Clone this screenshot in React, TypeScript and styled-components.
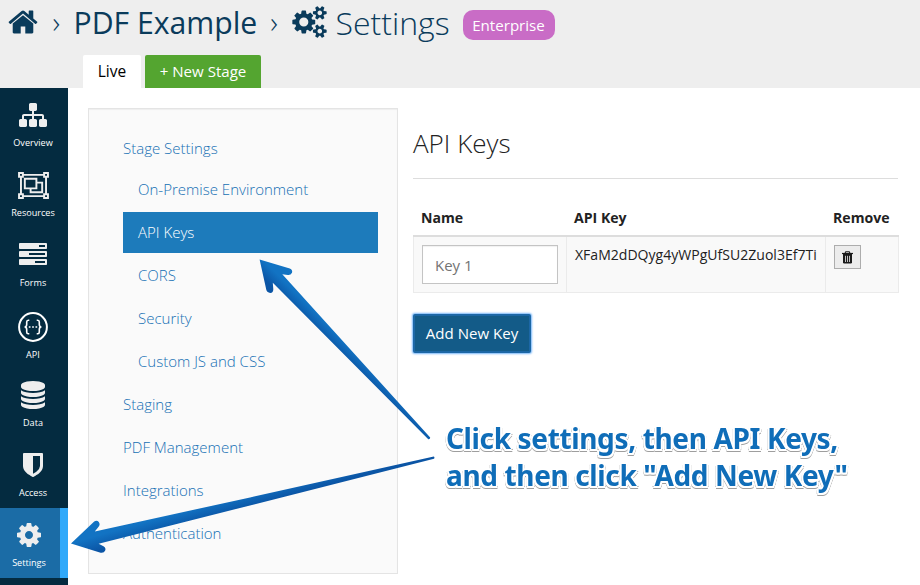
import React from 'react';
import styled, { createGlobalStyle } from 'styled-components';

const GlobalStyle = createGlobalStyle`
  *, *::before, *::after { box-sizing: border-box; }
  html, body { margin: 0; padding: 0; overflow: hidden; }
  body { background: #fff; color: #222; font-family: "Open Sans", "Noto Sans", sans-serif; }
`;

const Page = styled.div`
  position: relative;
  width: 920px;
  height: 585px;
  overflow: hidden;
  background: #fff;
`;

const Header = styled.header`
  height: 88px;
  background: #eee;
  color: #0a3b5b;
`;

const Breadcrumb = styled.div`
  display: flex;
  align-items: center;
  height: 44px;
  padding-left: 7px;
  line-height: 44px;
`;

const Chevron = styled.span<{ $w: number }>`
  width: ${p => p.$w}px;
  padding-bottom: 1px;
  text-align: center;
  font-size: 30px;
  font-weight: 300;
`;

const ProjectName = styled.span`
  width: 183px;
  margin-top: 2px;
  font-size: 30.2px;
  white-space: nowrap;
`;

const SectionName = styled.span`
  width: 136px;
  margin-top: 1px;
  padding-left: 9px;
  font-size: 32px;
  font-weight: 300;
`;

const PlanBadge = styled.span`
  width: 92px;
  height: 30px;
  margin-top: 6px;
  border-radius: 10px;
  background: #c96cc6;
  color: #fff;
  font-size: 15.1px;
  line-height: 30px;
  text-align: center;
`;

const Tabs = styled.div`
  display: flex;
  gap: 4px;
  height: 44px;
  padding: 11px 0 0 83px;
`;

const Tab = styled.div<{ $primary?: boolean }>`
  width: ${p => (p.$primary ? 116 : 58)}px;
  border-radius: 2px 2px 0 0;
  background: ${p => (p.$primary ? '#54a530' : '#fff')};
  color: ${p => (p.$primary ? '#fff' : '#000')};
  font-size: ${p => (p.$primary ? 15.1 : 15.5)}px;
  line-height: 33px;
  text-align: center;
`;

const Body = styled.div`
  display: flex;
  height: 497px;
`;

const Sidebar = styled.nav`
  flex: none;
  width: 68px;
  background: #042b40;
`;

const SideItem = styled.div<{ $active?: boolean; $low?: boolean }>`
  display: flex;
  flex-direction: column;
  align-items: center;
  gap: 6px;
  height: 70px;
  padding: ${p => (p.$low ? 14 : 12)}px 2px 0 0;
  color: #eee;
  ${p => p.$active && `
    background: #1b6ca6;
    border-right: 8px solid #30a9fa;
  `}
`;

const SideIcon = styled.div`
  display: flex;
  align-items: center;
  justify-content: center;
  height: 30px;
`;

const SideLabel = styled.div`
  color: #fff;
  font-size: 9.1px;
  line-height: 13px;
`;

const SettingsMenu = styled.nav`
  flex: none;
  width: 310px;
  height: 466px;
  margin: 20px 0 0 20px;
  padding: 19px 19px 0 34px;
  border: 1px solid #e4e4e4;
  background: #fafafa;
  box-shadow: inset 0 1px 1px rgba(0, 0, 0, 0.05);
`;

const MenuItem = styled.div<{ $nested?: boolean; $active?: boolean; $tight?: boolean }>`
  height: 41px;
  margin-top: ${p => (p.$tight ? 0 : 2)}px;
  padding-left: ${p => (p.$nested ? 15 : 0)}px;
  background: ${p => (p.$active ? '#1d7bbb' : 'transparent')};
  color: ${p => (p.$active ? '#fff' : '#1670b4')};
  font-size: 15.02px;
  font-weight: ${p => (p.$active ? 340 : 310)};
  line-height: 41px;
`;

const Content = styled.main`
  width: 485px;
  margin-left: 15px;
`;

const Heading = styled.h2`
  height: 91px;
  margin: 0;
  padding-top: 34px;
  border-bottom: 1px solid #ddd;
  font-size: 26px;
  font-weight: 300;
  line-height: 42px;
`;

const KeyTable = styled.div`
  display: grid;
  grid-template-columns: 153px 259px 74px;
  margin-top: 21px;
`;

const HeadCell = styled.div`
  height: 37px;
  padding-left: 8px;
  border-bottom: 2px solid #ddd;
  font-size: 14.1px;
  font-weight: 700;
  line-height: 36px;
`;

const Cell = styled.div`
  height: 56px;
  padding: 8px;
  border: 1px solid #ebebeb;
  border-width: 0 0 1px 1px;
  background: #f9f9f9;
  font-size: 14.06px;
  line-height: 20px;
  &:last-child { border-right-width: 1px; }
`;

const NameInput = styled.div`
  width: 136px;
  height: 39px;
  padding-left: 12px;
  border: 1px solid #c4c4c4;
  background: #fff;
  box-shadow: inset 0 1px 1px rgba(0, 0, 0, 0.06);
  color: #737373;
  font-size: 15px;
  line-height: 39px;
`;

const RemoveButton = styled.button`
  display: flex;
  align-items: center;
  justify-content: center;
  width: 27px;
  height: 24px;
  padding: 0;
  border: 1px solid #adadad;
  background: #ececec;
  color: #1a1a1a;
`;

const AddButton = styled.button`
  display: block;
  width: 118px;
  height: 39px;
  margin-top: 21px;
  padding: 0;
  border: 2px solid #1c67a6;
  border-radius: 2px;
  background: #135b88;
  box-shadow: 0 0 2px 1px #78b6f8;
  color: #fff;
  font: 400 15.05px/35px "Open Sans", sans-serif;
`;

const ArrowLayer = styled.svg`
  position: absolute;
  top: 0;
  left: 0;
  pointer-events: none;
`;

const Callout = styled.div`
  position: absolute;
  top: 420.4px;
  left: 446px;
  color: #0f6db8;
  font: 700 28px/36.4px "Noto Sans", sans-serif;
  letter-spacing: -0.36px;
  white-space: pre;
  text-shadow: 2px 0 #fff, -2px 0 #fff, 0 2px #fff, 0 -2px #fff,
    1.5px 1.5px #fff, -1.5px 1.5px #fff, 1.5px -1.5px #fff, -1.5px -1.5px #fff;
  filter: drop-shadow(0 1px 0.6px rgba(0, 0, 0, 0.38));
`;

const paths = {
  home: 'M1472 992v480q0 26-19 45t-45 19h-384v-384h-256v384h-384q-26 0-45-19t-19-45v-480q0-1 .5-3t.5-3l575-474 575 474q1 2 1 6zm223-69l-62 74q-8 9-21 11h-3q-13 0-21-7l-692-577-692 577q-12 8-24 7-13-2-21-11l-62-74q-8-10-7-23.5t11-21.5l719-599q32-26 76-26t76 26l244 204v-195q0-14 9-23t23-9h192q14 0 23 9t9 23v408l219 182q10 8 11 21.5t-7 23.5z',
  cogs: 'M832 896q0-106-75-181t-181-75-181 75-75 181 75 181 181 75 181-75 75-181zm768 512q0-52-38-90t-90-38-90 38-38 90q0 53 37.5 90.5t90.5 37.5 90.5-37.5 37.5-90.5zm0-1024q0-52-38-90t-90-38-90 38-38 90q0 53 37.5 90.5t90.5 37.5 90.5-37.5 37.5-90.5zm-384 421v185q0 10-7 19.5t-16 10.5l-155 24q-11 35-32 76 34 48 90 115 7 11 7 20 0 12-7 19-23 30-82.5 89.5t-78.5 59.5q-11 0-21-7l-115-90q-37 19-77 31-11 108-23 155-7 24-30 24h-186q-11 0-20-7.5t-10-17.5l-23-153q-34-10-75-31l-118 89q-7 7-20 7-11 0-21-8-144-133-144-160 0-9 7-19 10-14 41-53t47-61q-23-44-35-82l-152-24q-10-1-17-9.5t-7-19.5v-185q0-10 7-19.5t16-10.5l155-24q11-35 32-76-34-48-90-115-7-11-7-20 0-12 7-20 22-30 82-89t79-59q11 0 21 7l115 90q34-18 77-32 11-108 23-154 7-24 30-24h186q11 0 20 7.5t10 17.5l23 153q34 10 75 31l118-89q8-7 20-7 11 0 21 8 144 133 144 160 0 9-7 19-12 16-42 54t-45 60q23 48 34 82l152 23q10 2 17 10.5t7 19.5zm640 533v140q0 16-149 31-12 27-30 52 51 113 51 138 0 4-4 7-122 71-124 71-8 0-46-47t-52-68q-20 2-30 2t-30-2q-14 21-52 68t-46 47q-2 0-124-71-4-3-4-7 0-25 51-138-18-25-30-52-149-15-149-31v-140q0-16 149-31 13-29 30-52-51-113-51-138 0-4 4-7 4-2 35-20t59-34 30-16q8 0 46 46.5t52 67.5q20-2 30-2t30 2q51-71 92-112l6-2q4 0 124 70 4 3 4 7 0 25-51 138 17 23 30 52 149 15 149 31zm0-1024v140q0 16-149 31-12 27-30 52 51 113 51 138 0 4-4 7-122 71-124 71-8 0-46-47t-52-68q-20 2-30 2t-30-2q-14 21-52 68t-46 47q-2 0-124-71-4-3-4-7 0-25 51-138-18-25-30-52-149-15-149-31v-140q0-16 149-31 13-29 30-52-51-113-51-138 0-4 4-7 4-2 35-20t59-34 30-16q8 0 46 46.5t52 67.5q20-2 30-2t30 2q51-71 92-112l6-2q4 0 124 70 4 3 4 7 0 25-51 138 17 23 30 52 149 15 149 31z',
  sitemap: 'M1792 1248v320q0 40-28 68t-68 28h-320q-40 0-68-28t-28-68v-320q0-40 28-68t68-28h96v-192h-512v192h96q40 0 68 28t28 68v320q0 40-28 68t-68 28h-320q-40 0-68-28t-28-68v-320q0-40 28-68t68-28h96v-192h-512v192h96q40 0 68 28t28 68v320q0 40-28 68t-68 28h-320q-40 0-68-28t-28-68v-320q0-40 28-68t68-28h96v-192q0-52 38-90t90-38h512v-192h-96q-40 0-68-28t-28-68v-320q0-40 28-68t68-28h320q40 0 68 28t28 68v320q0 40-28 68t-68 28h-96v192h512q52 0 90 38t38 90v192h96q40 0 68 28t28 68z',
  group: 'M2048 384h-128v1024h128v384h-384v-128h-1280v128h-384v-384h128v-1024h-128v-384h384v128h1280v-128h384zM1792 128v128h128v-128zM128 128v128h128v-128zM256 1664v-128h-128v128zM1664 1536v-128h128v-1024h-128v-128h-1280v128h-128v1024h128v128zM1920 1664v-128h-128v128zM1280 640h384v768h-896v-256h-384v-768h896zM512 1024h640v-512h-640zM1536 1280v-512h-256v384h-384v128z',
  tasks: 'M1024 1408h640v-128h-640v128zm-384-512h1024v-128h-1024v128zm640-512h384v-128h-384v128zm512 832v256q0 26-19 45t-45 19h-1664q-26 0-45-19t-19-45v-256q0-26 19-45t45-19h1664q26 0 45 19t19 45zm0-512v256q0 26-19 45t-45 19h-1664q-26 0-45-19t-19-45v-256q0-26 19-45t45-19h1664q26 0 45 19t19 45zm0-512v256q0 26-19 45t-45 19h-1664q-26 0-45-19t-19-45v-256q0-26 19-45t45-19h1664q26 0 45 19t19 45z',
  database: 'M896 768q237 0 443-43t325-127v170q0 69-103 128t-280 93.5-385 34.5-385-34.5-280-93.5-103-128v-170q119 84 325 127t443 43zm0 768q237 0 443-43t325-127v170q0 69-103 128t-280 93.5-385 34.5-385-34.5-280-93.5-103-128v-170q119 84 325 127t443 43zm0-384q237 0 443-43t325-127v170q0 69-103 128t-280 93.5-385 34.5-385-34.5-280-93.5-103-128v-170q119 84 325 127t443 43zm0-1152q208 0 385 34.5t280 93.5 103 128v128q0 69-103 128t-280 93.5-385 34.5-385-34.5-280-93.5-103-128v-128q0-69 103-128t280-93.5 385-34.5z',
  shield: 'M1344 960v-640h-448v1137q119-63 213-137 235-184 235-360zm192-768v768q0 86-33.5 170.5t-83 150-118 127.5-126.5 103-121 77.5-89.5 49.5-42.5 20q-12 6-26 6t-26-6q-16-7-42.5-20t-89.5-49.5-121-77.5-126.5-103-118-127.5-83-150-33.5-170.5v-768q0-26 19-45t45-19h1152q26 0 45 19t19 45z',
  cog: 'M1152 896q0-106-75-181t-181-75-181 75-75 181 75 181 181 75 181-75 75-181zm512-109v222q0 12-8 23t-20 13l-185 28q-19 54-39 91 35 50 107 138 10 12 10 25t-9 23q-27 37-99 108t-94 71q-12 0-26-9l-138-108q-44 23-91 38-16 136-29 186-7 28-36 28h-222q-14 0-24.5-8.5t-11.5-21.5l-28-184q-49-16-90-37l-141 107q-10 9-25 9-14 0-25-11-126-114-165-168-7-10-7-23 0-12 8-23 15-21 51-66.5t54-70.5q-27-50-41-99l-183-27q-13-2-21-12.5t-8-23.5v-222q0-12 8-23t19-13l186-28q14-46 39-92-40-57-107-138-10-12-10-24 0-10 9-23 26-36 98.5-107.5t94.5-71.5q13 0 26 10l138 107q44-23 91-38 16-136 29-186 7-28 36-28h222q14 0 24.5 8.5t11.5 21.5l28 184q49 16 90 37l142-107q9-9 24-9 13 0 25 10 129 119 165 170 7 8 7 22 0 12-8 23-15 21-51 66.5t-54 70.5q26 50 41 98l183 28q13 2 21 12.5t8 23.5z',
};

type GlyphProps = { d: string; box?: string; w?: number; h?: number };
const Glyph = ({ d, box = '0 0 1792 1792', w = 28, h = 28 }: GlyphProps) => (
  <svg width={w} height={h} viewBox={box} fill="currentColor" fillRule="evenodd">
    <path d={d} />
  </svg>
);

const ApiIcon = () => (
  <svg width="30" height="30" viewBox="0 0 30 30" fill="none" stroke="#fff">
    <circle cx="15" cy="15" r="13.9" strokeWidth="2" />
    <path d="M11.3 8.3H10.3Q8.7 8.3 8.7 10V12.6Q8.7 14.9 6.6 15Q8.7 15.1 8.7 17.4V20Q8.7 21.7 10.3 21.7H11.3M18.7 8.3H19.7Q21.3 8.3 21.3 10V12.6Q21.3 14.9 23.4 15Q21.3 15.1 21.3 17.4V20Q21.3 21.7 19.7 21.7H18.7" strokeWidth="1.6" />
    <path d="M10.8 15h1.7M14.15 15h1.7M17.5 15h1.7" strokeWidth="1.7" />
  </svg>
);

const TrashIcon = () => (
  <svg width="11" height="13" viewBox="0 0 11 13" fill="none" stroke="currentColor">
    <path d="M3.3 2.4V1.6Q3.3.7 4.2.7H6.8Q7.7.7 7.7 1.6V2.4" strokeWidth="1.1" />
    <path d="M0 2.5H11" strokeWidth="1.2" />
    <path d="M1 3H10V11.3Q10 12.6 8.8 12.6H2.2Q1 12.6 1 11.3Z" fill="currentColor" stroke="none" />
    <path d="M3.5 4.8V11M5.5 4.8V11M7.5 4.8V11" stroke="#ececec" strokeWidth=".8" />
  </svg>
);

const sideItems = [
  { label: 'Overview', icon: <Glyph d={paths.sitemap} /> },
  { label: 'Resources', icon: <Glyph d={paths.group} box="0 0 2048 1792" w={31} h={27} /> },
  { label: 'Forms', icon: <Glyph d={paths.tasks} /> },
  { label: 'API', icon: <ApiIcon />, low: true },
  { label: 'Data', icon: <Glyph d={paths.database} /> },
  { label: 'Access', icon: <Glyph d={paths.shield} /> },
  { label: 'Settings', icon: <Glyph d={paths.cog} />, active: true },
];

const menuItems = [
  { label: 'Stage Settings', tight: true },
  { label: 'On-Premise Environment', nested: true, tight: true },
  { label: 'API Keys', nested: true, active: true },
  { label: 'CORS', nested: true },
  { label: 'Security', nested: true },
  { label: 'Custom JS and CSS', nested: true },
  { label: 'Staging' },
  { label: 'PDF Management' },
  { label: 'Integrations' },
  { label: 'Authentication' },
];

const Arrows = () => (
  <ArrowLayer width="920" height="585" viewBox="0 0 920 585">
    <defs>
      <linearGradient id="steep" gradientUnits="userSpaceOnUse" x1="345" y1="342" x2="336" y2="351">
        <stop offset="0" stopColor="#1273c3" />
        <stop offset="1" stopColor="#0b55a5" />
      </linearGradient>
      <linearGradient id="shallow" gradientUnits="userSpaceOnUse" x1="180" y1="512" x2="184" y2="526">
        <stop offset="0" stopColor="#1273c3" />
        <stop offset="1" stopColor="#0b55a5" />
      </linearGradient>
    </defs>
    <path fill="url(#steep)" d="M259.6 259.4L289.8 268.6Q292.9 270 292 272.8Q290.8 275.3 287.8 275L282.3 274.3L430.2 437.6Q430.2 439.6 428.3 439.3L272.8 282.7L273.3 289.2Q273.3 292.7 270.3 293.1Q267.4 293.2 266.4 290.3Z" />
    <path fill="url(#shallow)" d="M71 543.4L94.2 521.6Q96.8 519.8 98.8 522Q100.5 524.4 98.6 526.8L94.8 531.5L250 497.4L433.8 456.6Q435 457.6 434 458.8L98.6 543.8L103.5 546.2Q106.2 547.8 105.2 550.5Q103.9 553.4 100.6 552.7Z" />
  </ArrowLayer>
);

export default function App() {
  return (
    <Page>
      <GlobalStyle />
      <Header>
        <Breadcrumb>
          <Glyph d={paths.home} w={32} h={32} />
          <Chevron $w={34.5}>›</Chevron>
          <ProjectName>PDF Example</ProjectName>
          <Chevron $w={35}>›</Chevron>
          <Glyph d={paths.cogs} box="-64 0 1920 1792" w={35} h={32} />
          <SectionName>Settings</SectionName>
          <PlanBadge>Enterprise</PlanBadge>
        </Breadcrumb>
        <Tabs>
          <Tab>Live</Tab>
          <Tab $primary>+ New Stage</Tab>
        </Tabs>
      </Header>
      <Body>
        <Sidebar>
          {sideItems.map(item => (
            <SideItem key={item.label} $active={item.active} $low={item.low}>
              <SideIcon>{item.icon}</SideIcon>
              <SideLabel>{item.label}</SideLabel>
            </SideItem>
          ))}
        </Sidebar>
        <SettingsMenu>
          {menuItems.map(item => (
            <MenuItem key={item.label} $nested={item.nested} $active={item.active} $tight={item.tight}>
              {item.label}
            </MenuItem>
          ))}
        </SettingsMenu>
        <Content>
          <Heading>API Keys</Heading>
          <KeyTable>
            <HeadCell>Name</HeadCell>
            <HeadCell>API Key</HeadCell>
            <HeadCell>Remove</HeadCell>
            <Cell><NameInput>Key 1</NameInput></Cell>
            <Cell>XFaM2dDQyg4yWPgUfSU2Zuol3Ef7Ti</Cell>
            <Cell><RemoveButton aria-label="Remove key"><TrashIcon /></RemoveButton></Cell>
          </KeyTable>
          <AddButton>Add New Key</AddButton>
        </Content>
      </Body>
      <Arrows />
      <Callout>{'Click settings, then API Keys,\nand then click "Add New Key"'}</Callout>
    </Page>
  );
}
